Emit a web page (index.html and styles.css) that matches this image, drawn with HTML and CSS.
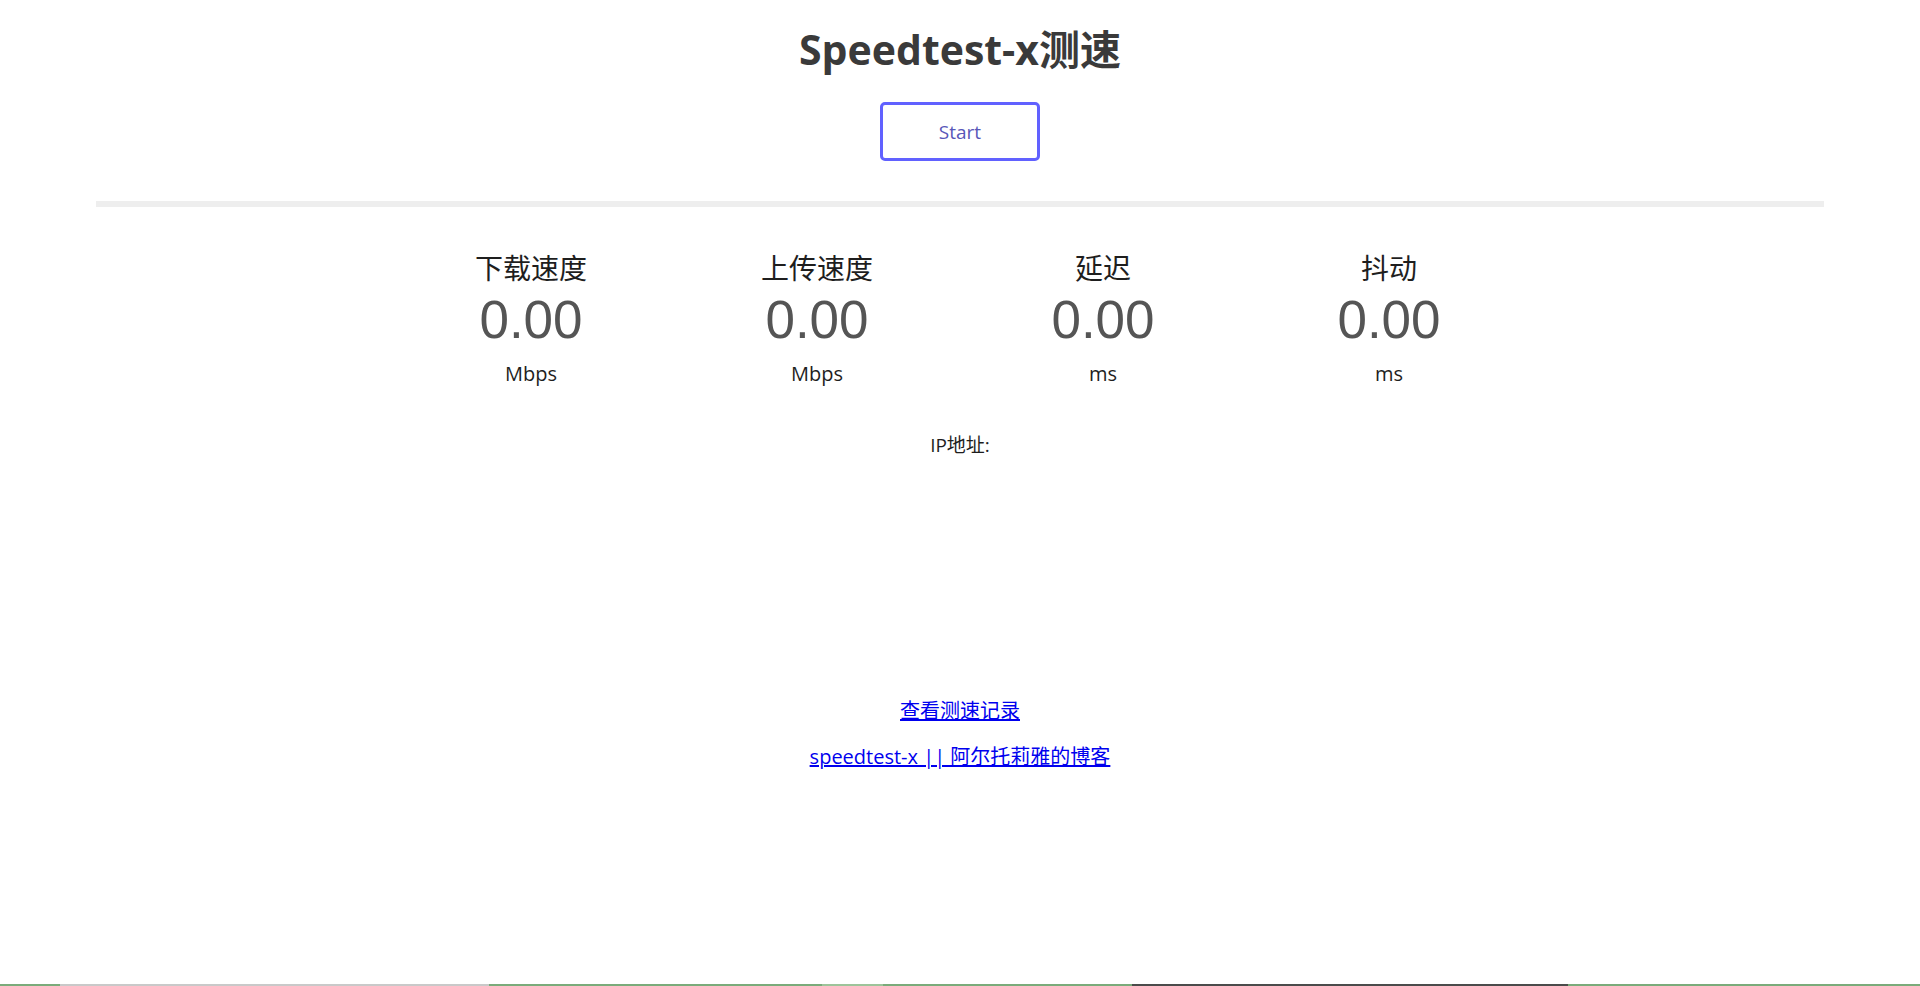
FILE: index.html
```html
<!DOCTYPE html>
<html lang="zh-CN">
<head>
<meta charset="utf-8">
<title>Speedtest-x测速</title>
<link rel="stylesheet" href="styles.css">
</head>
<body>
<div class="page">
  <h1 class="title">Speedtest-x测速</h1>
  <div class="actions">
    <button class="start-btn" type="button">Start</button>
  </div>
  <div class="divider"></div>
  <div class="metrics">
    <div class="metric">
      <div class="metric-label">下载速度</div>
      <div class="metric-value">0.00</div>
      <div class="metric-unit">Mbps</div>
    </div>
    <div class="metric">
      <div class="metric-label">上传速度</div>
      <div class="metric-value">0.00</div>
      <div class="metric-unit">Mbps</div>
    </div>
    <div class="metric">
      <div class="metric-label">延迟</div>
      <div class="metric-value">0.00</div>
      <div class="metric-unit">ms</div>
    </div>
    <div class="metric">
      <div class="metric-label">抖动</div>
      <div class="metric-value">0.00</div>
      <div class="metric-unit">ms</div>
    </div>
  </div>
  <div class="ip">IP地址:</div>
  <div class="links">
    <a class="link" href="#">查看测速记录</a>
    <a class="link link-second" href="#">speedtest-x || 阿尔托莉雅的博客</a>
  </div>
  <div class="strip">
    <span class="seg seg-a"></span>
    <span class="seg seg-b"></span>
    <span class="seg seg-c"></span>
    <span class="seg seg-d"></span>
    <span class="seg seg-e"></span>
    <span class="seg seg-f"></span>
    <span class="seg seg-g"></span>
  </div>
</div>
</body>
</html>
```

FILE: styles.css
```css
html, body {
  margin: 0;
  padding: 0;
  background: #ffffff;
}

body {
  font-family: "Open Sans", "Noto Sans CJK SC", sans-serif;
  color: #1e1e1e;
}

.page {
  display: flex;
  flex-direction: column;
  min-height: 986px;
  padding-top: 21px;
  box-sizing: border-box;
}

.title {
  margin: 0;
  text-align: center;
  font-size: 41px;
  line-height: 56px;
  font-weight: 700;
  color: #3a3a3a;
}

.actions {
  display: flex;
  justify-content: center;
  margin-top: 25px;
}

.start-btn {
  width: 160px;
  height: 59px;
  border: 3px solid #6161ff;
  border-radius: 5px;
  background: #ffffff;
  color: #5856b8;
  font-family: "Open Sans", "Noto Sans CJK SC", sans-serif;
  font-size: 19px;
  cursor: pointer;
}

.divider {
  margin: 40px 96px 0;
  height: 6px;
  background: #eeeeee;
}

.metrics {
  display: grid;
  grid-template-columns: repeat(4, 286px);
  justify-content: center;
  margin-top: 43px;
}

.metric {
  display: flex;
  flex-direction: column;
  align-items: center;
}

.metric-label {
  font-size: 28px;
  line-height: 36px;
  color: #1e1e1e;
}

.metric-value {
  margin-top: 4px;
  font-family: "Liberation Sans", "Open Sans", sans-serif;
  font-size: 53px;
  line-height: 60px;
  color: #555555;
}

.metric-unit {
  margin-top: 10px;
  font-size: 20px;
  line-height: 28px;
  color: #1e1e1e;
}

.ip {
  margin-top: 43px;
  text-align: center;
  font-size: 19px;
  line-height: 28px;
  color: #1e1e1e;
}

.links {
  display: flex;
  flex-direction: column;
  align-items: center;
  margin-top: 238px;
}

.link {
  font-size: 20px;
  line-height: 28px;
  color: #0000ee;
  text-decoration: underline;
}

.link-second {
  margin-top: 18px;
}

.strip {
  margin-top: auto;
  display: flex;
  height: 2px;
}

.seg {
  display: block;
  height: 2px;
}

.seg-a { width: 60px; background: #7aab7a; }
.seg-b { width: 429px; background: #c9c9c9; }
.seg-c { width: 333px; background: #7aab7a; }
.seg-d { width: 61px; background: #9dc49a; }
.seg-e { width: 249px; background: #7aab7a; }
.seg-f { width: 436px; background: #4b4b4b; }
.seg-g { flex: 1; background: #7aab7a; }
```
